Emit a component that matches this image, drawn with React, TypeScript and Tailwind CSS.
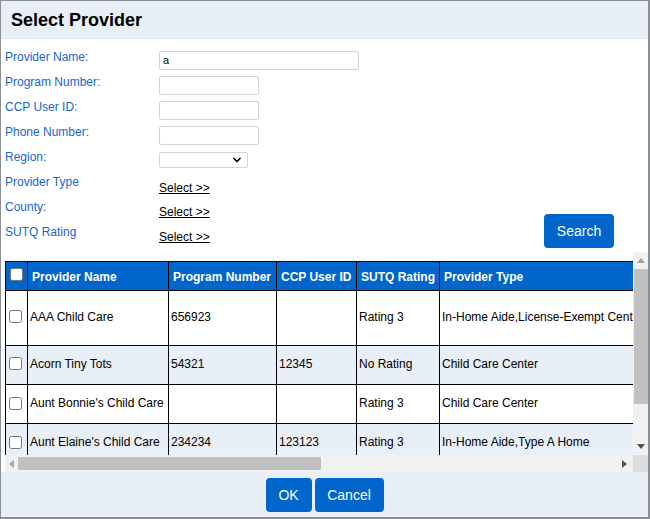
import React from 'react';
import { ChevronDown } from 'lucide-react';

const fields = ['Provider Name:', 'Program Number:', 'CCP User ID:', 'Phone Number:', 'Region:', 'Provider Type', 'County:', 'SUTQ Rating'];

const rows = [
  { name: 'AAA Child Care', program: '656923', ccp: '', rating: 'Rating 3', type: 'In-Home Aide,License-Exempt Center', h: 'h-[55px]', boxPad: 'pb-[3px]' },
  { name: 'Acorn Tiny Tots', program: '54321', ccp: '12345', rating: 'No Rating', type: 'Child Care Center', h: 'h-[39px]', boxPad: 'pb-[3px]' },
  { name: "Aunt Bonnie's Child Care", program: '', ccp: '', rating: 'Rating 3', type: 'Child Care Center', h: 'h-[39px]', boxPad: 'pb-[1px]' },
  { name: "Aunt Elaine's Child Care", program: '234234', ccp: '123123', rating: 'Rating 3', type: 'In-Home Aide,Type A Home', h: 'h-[39px]', boxPad: 'pb-[1px]' },
];

const headers = ['Provider Name', 'Program Number', 'CCP User ID', 'SUTQ Rating', 'Provider Type'];
const colWidths = ['w-[141px]', 'w-[108px]', 'w-[80px]', 'w-[83px]', 'w-[260px]'];

function Box({ className }: { className: string }) {
  return <span className={`block w-[13px] h-[13px] rounded-[2.5px] ${className}`} />;
}

function Arrow({ dir }: { dir: 'up' | 'down' | 'left' | 'right' }) {
  const points = { up: '4,1 8,6 0,6', down: '0,1 8,1 4,6', left: '6,0 6,8 1,4', right: '1,0 1,8 6,4' }[dir];
  return (
    <svg width="8" height="8" viewBox="0 0 8 8" className="shrink-0">
      <polygon points={points} fill={dir === 'up' ? '#a3a3a3' : dir === 'left' ? '#a3a3a3' : '#505050'} />
    </svg>
  );
}

export default function App() {
  return (
    <div className="w-[650px] h-[519px] overflow-hidden bg-white border border-[#8a8f96] border-b-[2px] border-r-[2px] font-['Liberation_Sans',Arial,sans-serif] text-xs flex flex-col">
      {/* Title */}
      <div className="h-[38px] shrink-0 bg-[#e9eff6] border-b border-[#dde3ea] pl-[10px] flex items-center">
        <h1 className="text-lg font-bold text-black">Select Provider</h1>
      </div>

      {/* Search form */}
      <div className="h-[213px] shrink-0 flex">
        <div className="w-[158px] shrink-0 pl-1 pt-[11px] text-[#1a66cc]">
          {fields.map(f => (
            <div key={f} className="h-[25px] leading-[14px]">{f}</div>
          ))}
        </div>
        <div className="w-[385px] shrink-0 pt-3 text-xs">
          <div className="h-[25px]">
            <input readOnly value="a" className="block w-[200px] h-[19px] border border-[#d4d4d4] rounded-[2px] px-[3px] pb-[2px] text-[11px] text-black outline-none" />
          </div>
          {[0, 1, 2].map(i => (
            <div key={i} className="h-[25px]">
              <input readOnly value="" className="block w-[100px] h-[19px] border border-[#d4d4d4] rounded-[2px]" />
            </div>
          ))}
          <div className="h-[25px] pt-px">
            <div className="w-[89px] h-[16px] border border-[#d4d4d4] rounded-[2px] flex items-center justify-end pr-[4px]">
              <ChevronDown size={12} strokeWidth={3.5} className="text-black" />
            </div>
          </div>
          <div className="h-[24px] pt-[4px]">
            <a className="text-xs leading-[14px] text-black underline">Select &gt;&gt;</a>
          </div>
          <div className="h-[25px] pt-[4px]">
            <a className="text-xs leading-[14px] text-black underline">Select &gt;&gt;</a>
          </div>
          <div className="h-[25px] pt-[4px]">
            <a className="text-xs leading-[14px] text-black underline">Select &gt;&gt;</a>
          </div>
        </div>
        <div className="pt-[175px]">
          <button className="w-[70px] h-[34px] rounded-[4px] bg-[#0066cc] text-white text-sm">Search</button>
        </div>
      </div>

      {/* Results grid with scrollbars */}
      <div className="pl-1 flex shrink-0">
        <div className="w-[628px] shrink-0">
          <div className="h-[203px] overflow-hidden pt-[9px] bg-white">
            <table className="border-collapse table-fixed w-[695px] text-black">
              <thead>
                <tr className="h-[29px] bg-[#0066cc] text-white font-bold">
                  <th className="w-[22px] border border-black border-b-0 pl-[4px] pb-[3px]">
                    <Box className="bg-white border border-[#767676]" />
                  </th>
                  {headers.map((h, i) => (
                    <th key={h} className={`${colWidths[i]} border border-black border-b-0 text-left pl-[4px] pt-[2px] font-bold whitespace-nowrap overflow-hidden`}>{h}</th>
                  ))}
                </tr>
              </thead>
              <tbody>
                {rows.map((r, i) => (
                  <tr key={r.name} className={`${r.h} ${i % 2 === 1 ? 'bg-[#e9eff6]' : 'bg-white'}`}>
                    <td className={`border border-black pl-[3px] align-middle ${r.boxPad}`}>
                      <Box className="bg-white border border-[#767676]" />
                    </td>
                    <td className="border border-black pl-[2px] pb-[2px] whitespace-nowrap">{r.name}</td>
                    <td className="border border-black pl-[2px] pb-[2px]">{r.program}</td>
                    <td className="border border-black pl-[2px] pb-[2px]">{r.ccp}</td>
                    <td className="border border-black pl-[2px] pb-[2px]">{r.rating}</td>
                    <td className="border border-black pl-[2px] pb-[2px] whitespace-nowrap overflow-hidden">{r.type}</td>
                  </tr>
                ))}
              </tbody>
            </table>
          </div>
          {/* Horizontal scrollbar */}
          <div className="h-[17px] bg-[#f1f1f1] flex items-center">
            <div className="w-[13px] flex justify-center"><Arrow dir="left" /></div>
            <div className="w-[303px] h-[13px] bg-[#c1c1c1]" />
            <div className="flex-1" />
            <div className="w-[17px] flex justify-center"><Arrow dir="right" /></div>
          </div>
        </div>
        {/* Vertical scrollbar */}
        <div className="w-[16px] shrink-0 flex flex-col">
          <div className="h-[203px] bg-[#f1f1f1] flex flex-col items-center">
            <div className="h-[17px] flex items-center"><Arrow dir="up" /></div>
            <div className="w-[14px] h-[135px] bg-[#c1c1c1]" />
            <div className="flex-1" />
            <div className="h-[17px] flex items-center"><Arrow dir="down" /></div>
          </div>
          <div className="h-[17px] bg-[#dcdcdc]" />
        </div>
      </div>

      {/* Footer */}
      <div className="flex-1 bg-[#e9eff6] flex justify-center gap-[3px] pt-[6px]">
        <button className="w-[46px] h-[34px] rounded-[4px] bg-[#0066cc] text-white text-sm">OK</button>
        <button className="w-[69px] h-[34px] rounded-[4px] bg-[#0066cc] text-white text-sm">Cancel</button>
      </div>
    </div>
  );
}
